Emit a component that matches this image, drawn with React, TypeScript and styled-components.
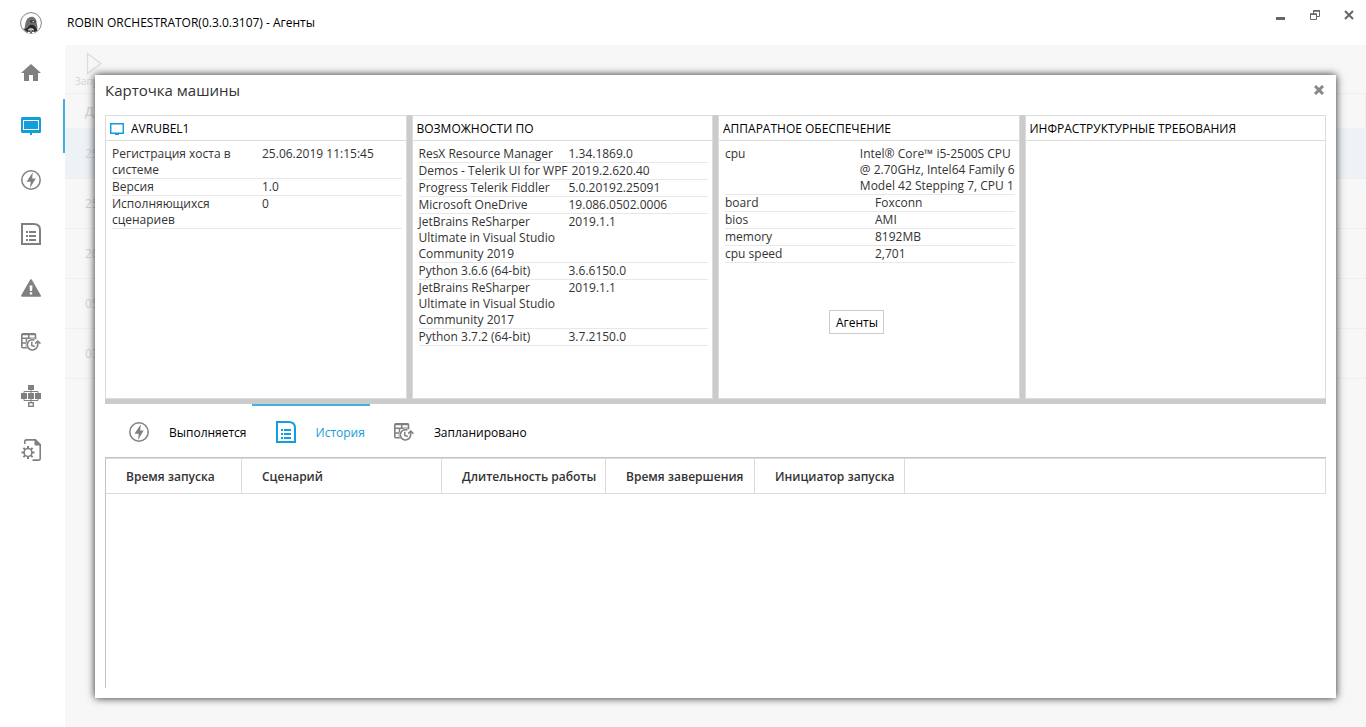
import React from 'react';
import styled, { createGlobalStyle } from 'styled-components';

const gray = '#808080';
const blue = '#119eda';
const accent = '#41b1e1';
const line = '#dcdcdc';
const splitter = '#cbcbcb';

const GlobalStyle = createGlobalStyle`
  *, *::before, *::after { box-sizing: border-box; }
  body {
    margin: 0;
    background: #fff;
    color: #333;
    font: 12px/16px "Open Sans", "Noto Sans", sans-serif;
  }
  button { font: inherit; color: inherit; background: none; border: 0; padding: 0; cursor: pointer; }
  svg { display: block; flex: none; }
  dl, dd, h1, h2 { margin: 0; padding: 0; }
`;

/* Window frame */

const Window = styled.div`
  display: flex;
  flex-direction: column;
  min-height: 100vh;
`;

const TitleBar = styled.header`
  display: flex;
  align-items: center;
  height: 45px;
  padding: 0 10px 0 20px;
`;

const WindowTitle = styled.h1`
  flex: 1;
  margin-left: 25px;
  padding-top: 1px;
  color: #000;
  font-size: 12px;
  font-weight: 400;
`;

const WindowButtons = styled.div`
  display: flex;
  gap: 20px;
  padding-bottom: 16px;
`;

const WindowButton = styled.button`
  display: grid;
  place-items: center;
  width: 14px;
  height: 20px;
`;

const Body = styled.div`
  display: flex;
  flex: 1;
`;

const Sidebar = styled.nav`
  flex: 0 0 65px;
`;

const NavButton = styled.button<{ $active?: boolean }>`
  display: flex;
  align-items: center;
  justify-content: center;
  width: 65px;
  height: 54px;
  padding-right: 1px;
  border-right: 2px solid ${p => (p.$active ? accent : 'transparent')};
`;

/* Disabled page below the dialog */

const Main = styled.main`
  position: relative;
  flex: 1;
  min-width: 0;
  background: #f7f7f7;
  color: #d4d4d4;
`;

const Toolbar = styled.div`
  height: 49px;
  padding: 7px 10px 0;
  border-bottom: 1px solid #efefef;
`;

const ToolButton = styled.button`
  display: grid;
  justify-items: start;
  font-size: 10px;
  line-height: 12px;
  svg { margin-left: 11px; }
`;

const AgentTable = styled.table`
  width: 100%;
  border-collapse: collapse;
`;

const AgentHead = styled.th`
  height: 34px;
  padding: 2px 20px 0;
  border-right: 1px solid #efefef;
  font-weight: 600;
  text-align: left;
`;

const AgentRow = styled.tr<{ $selected?: boolean }>`
  height: 50px;
  border-bottom: 1px solid #efefef;
  background: ${p => (p.$selected ? '#ecf2f6' : 'transparent')};
  td { padding: 2px 20px 0; }
`;

/* Dialog */

const Overlay = styled.div`
  position: absolute;
  inset: 0;
  display: flex;
  padding: 30px 30px 29px;
`;

const Dialog = styled.section`
  display: flex;
  flex: 1;
  flex-direction: column;
  min-width: 0;
  padding: 0 10px 10px;
  background: #fff;
  color: #333;
  box-shadow: 0 0 8px rgba(0, 0, 0, 0.85);
`;

const DialogHeader = styled.div`
  display: flex;
  align-items: center;
  justify-content: space-between;
  height: 40px;
  padding-bottom: 10px;
`;

const DialogTitle = styled.h2`
  font-size: 15px;
  line-height: 20px;
  font-weight: 400;
`;

const Panels = styled.div`
  display: grid;
  grid-template-columns: repeat(4, minmax(0, 1fr));
  gap: 5px;
  min-height: 289px;
  border-bottom: 5px solid ${splitter};
  background: ${splitter};
`;

const Panel = styled.section`
  position: relative;
  border: 1px solid ${line};
  background: #fff;
`;

const PanelTitle = styled.h2`
  display: flex;
  align-items: center;
  gap: 7px;
  height: 25px;
  padding: 2px 0 0 4px;
  border-bottom: 1px solid ${line};
  color: #000;
  font-size: 12px;
  font-weight: 400;
  white-space: nowrap;
`;

const Facts = styled.dl`
  padding: 5px 4px 0 6px;
`;

const Fact = styled.div`
  display: flex;
  justify-content: space-between;
  border-bottom: 1px solid #e8e8e8;
`;

const FactName = styled.dt<{ $oneLine?: boolean }>`
  flex: ${p => (p.$oneLine ? '0 0 auto' : '0 1 150px')};
  min-width: 0;
  padding-right: ${p => (p.$oneLine ? '4px' : '10px')};
  white-space: ${p => (p.$oneLine ? 'nowrap' : 'normal')};
`;

const FactValue = styled.dd<{ $long?: boolean }>`
  flex: ${p => (p.$long ? '0 0 auto' : '1 1 0')};
  white-space: ${p => (p.$long ? 'pre' : 'normal')};
`;

const Tooltip = styled.div`
  position: absolute;
  top: 194px;
  left: 110px;
  padding: 4px 5px 2px 6px;
  border: 1px solid #ccc;
  background: #fff;
  color: #000;
`;

const Tabs = styled.div`
  display: flex;
  height: 53px;
`;

const Tab = styled.button<{ $active?: boolean }>`
  display: flex;
  align-items: center;
  gap: 20px;
  height: 53px;
  padding: 3px 5px 0 24px;
  box-shadow: ${p => (p.$active ? `inset 0 2px ${accent}` : 'none')};
  color: ${p => (p.$active ? blue : '#000')};
`;

const TabLabel = styled.span`
  padding-top: 1px;
`;

const History = styled.div`
  flex: 1;
  border-top: 1px solid #c4c4c4;
  border-left: 1px solid #c4c4c4;
`;

const HistoryTable = styled.table`
  width: 100%;
  border-collapse: separate;
  border-spacing: 0;
  table-layout: fixed;
  border-top: 1px solid ${line};
`;

const HistoryHead = styled.th<{ $width?: number }>`
  width: ${p => (p.$width ? `${p.$width}px` : 'auto')};
  height: 35px;
  padding: 2px 0 0 20px;
  border-right: 1px solid ${line};
  border-bottom: 1px solid ${line};
  font-weight: 600;
  text-align: left;
  white-space: nowrap;
`;

/* Icons */

const Logo = () => (
  <svg width="22" height="22" viewBox="0 0 22 22">
    <circle cx="11" cy="11" r="10.4" fill="#fff" stroke="#777" strokeWidth="0.9" />
    <path d="M4.500 16.500C5.500 14 4.800 5 11.500 4.800c3.500 0 4.800 2.700 5 5.200.3 2.500 1.700 4.500.5 8-3 2.500-9 2-12.500-1.500z" fill="#707070" />
    <path d="M9.500 9c2-1.700 5-1.400 6.800.5l-.6 1-4.700.3z" fill="#3a3a3a" />
    <path d="M3 16.500c3 .8 5-.6 5.700-2.500 2-2 5-1.800 6.600.8l2.200 3.400c-3.500 3.600-10.500 3.500-14.500-1.700z" fill="#292929" />
    <path d="M8.500 18.300c.5-1.800 4.500-1.800 5 0M8 20.500h2M12 20.500h2.500M11 18v1.500" stroke="#fff" strokeWidth="1.300" fill="none" />
    <circle cx="13.300" cy="9.500" r=".8" fill="#ddd" />
  </svg>
);

const HomeIcon = () => (
  <svg width="20" height="17" viewBox="2 3 20 17" fill={gray}>
    <path d="M10 20v-6h4v6h5v-8h3L12 3 2 12h3v8z" />
  </svg>
);

const MachineIcon = () => (
  <svg width="20" height="18" viewBox="0 0 20 18">
    <rect width="20" height="16" rx="1.500" fill={blue} />
    <rect x="2.500" y="3.500" width="15" height="9" fill={blue} stroke="#fff" />
    <path d="M9 15h2v3H9z" fill={blue} />
  </svg>
);

const BoltIcon = () => (
  <svg width="20" height="20" viewBox="0 0 20 20">
    <circle cx="10" cy="10" r="9.200" fill="none" stroke={gray} strokeWidth="1.500" />
    <path d="M11.800 2.300 5.500 11.700h4.200L9 18l5.700-9.500h-3.500z" fill={gray} />
  </svg>
);

const ListIcon = ({ color = gray }: { color?: string }) => (
  <svg width="20" height="22" viewBox="0 0 20 22">
    <path d="M1 1h11.500C17 1 19 3.500 19 7v14H1z" fill="none" stroke={color} strokeWidth="2" />
    <path d="M5 8h2v2H5zM8 8h7v2H8zM5 12h2v2H5zM8 12h7v2H8zM5 16h2v2H5zM8 16h7v2H8z" fill={color} />
  </svg>
);

const WarningIcon = () => (
  <svg width="20" height="18" viewBox="0 0 20 18">
    <path d="M10 1.200 18.900 16.800H1.100z" fill={gray} stroke={gray} strokeWidth="2" strokeLinejoin="round" />
    <path d="M8.500 6.500h3l-.4 5.500H8.900zM8.800 13.300h2.400v2.300H8.800z" fill="#fff" />
  </svg>
);

const ScheduleIcon = () => (
  <svg width="20" height="18" viewBox="0 0 20 18" fill="none" stroke={gray}>
    <rect x=".8" y=".8" width="13.700" height="14" rx="1" strokeWidth="1.600" />
    <path d="M1 1.500h13.500" strokeWidth="1.500" />
    <path d="M1 5.200h13.500M1 10h6M5.500 5v10M7.700 1v4" strokeWidth="1.500" />
    <circle cx="11.500" cy="11.800" r="6.500" fill="#fff" stroke="none" />
    <path d="M13.500 7a5.200 5.200 0 1 0 3.200 4.800V8.500" strokeWidth="1.600" />
    <path d="M14.200 10.600 16.800 8l2.600 2.600" strokeWidth="1.500" />
    <path d="M10.800 8.800v3.700l3 1" strokeWidth="1.500" />
  </svg>
);

const NetworkIcon = () => (
  <svg width="20" height="22" viewBox="0 0 20 22">
    <path d="M7 0h6v5H7zM0 8h6v6H0zM7 8h6v6H7zM14 8h6v6h-6z" fill={gray} />
    <path d="M3 8V6.500h14V8M10 5v3M3 14v1.500h14V14M10 14v3" fill="none" stroke={gray} />
    <rect x="7.700" y="17.700" width="4.600" height="3.600" fill="#fff" stroke={gray} strokeWidth="1.400" />
  </svg>
);

const teeth = [0, 45, 90, 135, 180, 225, 270, 315];

const SettingsIcon = () => (
  <svg width="20" height="22" viewBox="0 0 20 22" fill="none" stroke={gray}>
    <path d="M3.800 5V2.300c0-.9.500-1.400 1.400-1.400h9.300L19.200 5.500v14.300c0 .8-.5 1.300-1.300 1.300H11.500" strokeWidth="1.600" />
    <path d="M14 1v5h5z" fill={gray} strokeWidth="1" />
    <circle cx="7" cy="13.500" r="3.900" strokeWidth="1.500" />
    {teeth.map(angle => (
      <path key={angle} d="M7 9.800V7" strokeWidth="2" transform={`rotate(${angle} 7 13.500)`} />
    ))}
  </svg>
);

const MonitorIcon = () => (
  <svg width="14" height="12" viewBox="0 0 14 12">
    <path d="M.7.700h12.600v9.600H.7z" fill="none" stroke={blue} strokeWidth="1.500" />
    <path d="M5 10.500h4V12H5z" fill={blue} />
  </svg>
);

const PlayIcon = () => (
  <svg width="16" height="23" viewBox="0 0 16 23">
    <path d="M1.500 1.500 15 11.500 1.500 21.500z" fill="none" stroke="#dcdcdc" strokeWidth="1.300" />
  </svg>
);

const CloseIcon = ({ color, thickness }: { color: string; thickness: number }) => (
  <svg width="10" height="10" viewBox="0 0 10 10">
    <path d="M1 1l8 8M9 1 1 9" stroke={color} strokeWidth={thickness} />
  </svg>
);

/* Data */

const navItems = [
  { label: 'Главная', icon: <HomeIcon /> },
  { label: 'Агенты', icon: <MachineIcon />, active: true },
  { label: 'Выполняется', icon: <BoltIcon /> },
  { label: 'История', icon: <ListIcon /> },
  { label: 'Ошибки', icon: <WarningIcon /> },
  { label: 'Запланировано', icon: <ScheduleIcon /> },
  { label: 'Сеть', icon: <NetworkIcon /> },
  { label: 'Настройки', icon: <SettingsIcon /> },
];

type Item = { name: string; value: string; oneLine?: boolean; long?: boolean };

const hostFacts: Item[] = [
  { name: 'Регистрация хоста в системе', value: '25.06.2019 11:15:45' },
  { name: 'Версия', value: '1.0' },
  { name: 'Исполняющихся сценариев', value: '0' },
];

const softwareFacts: Item[] = [
  { name: 'ResX Resource Manager', value: '1.34.1869.0' },
  { name: 'Demos - Telerik UI for WPF', value: '2019.2.620.40', oneLine: true },
  { name: 'Progress Telerik Fiddler', value: '5.0.20192.25091' },
  { name: 'Microsoft OneDrive', value: '19.086.0502.0006' },
  { name: 'JetBrains ReSharper Ultimate in Visual Studio Community 2019', value: '2019.1.1' },
  { name: 'Python 3.6.6 (64-bit)', value: '3.6.6150.0' },
  { name: 'JetBrains ReSharper Ultimate in Visual Studio Community 2017', value: '2019.1.1' },
  { name: 'Python 3.7.2 (64-bit)', value: '3.7.2150.0' },
];

const hardwareFacts: Item[] = [
  {
    name: 'cpu',
    value: 'Intel® Core™ i5-2500S CPU\n@ 2.70GHz, Intel64 Family 6\nModel 42 Stepping 7, CPU 1',
    long: true,
  },
  { name: 'board', value: 'Foxconn' },
  { name: 'bios', value: 'AMI' },
  { name: 'memory', value: '8192MB' },
  { name: 'cpu speed', value: '2,701' },
];

const historyColumns = [
  { label: 'Время запуска', width: 136 },
  { label: 'Сценарий', width: 200 },
  { label: 'Длительность работы', width: 164 },
  { label: 'Время завершения', width: 149 },
  { label: 'Инициатор запуска', width: 150 },
];

const agentDays = ['25', '25', '20', '05', '03'];

const FactList = ({ items }: { items: Item[] }) => (
  <Facts>
    {items.map(item => (
      <Fact key={item.name}>
        <FactName $oneLine={item.oneLine}>{item.name}</FactName>
        <FactValue $long={item.long}>{item.value}</FactValue>
      </Fact>
    ))}
  </Facts>
);

export default function App() {
  return (
    <Window>
      <GlobalStyle />
      <TitleBar>
        <Logo />
        <WindowTitle>ROBIN ORCHESTRATOR(0.3.0.3107) - Агенты</WindowTitle>
        <WindowButtons>
          <WindowButton aria-label="Свернуть">
            <svg width="10" height="10" viewBox="0 0 10 10"><path d="M0 7h9v3H0z" fill="#666" /></svg>
          </WindowButton>
          <WindowButton aria-label="Восстановить">
            <svg width="10" height="10" viewBox="0 0 10 10" fill="none" stroke="#666">
              <path d="M.5 4.500h6v5h-6zM3.500 4V.5h6v6H7" />
              <path d="M0 4h7M3 1h7" strokeWidth="1.500" />
            </svg>
          </WindowButton>
          <WindowButton aria-label="Закрыть">
            <CloseIcon color="#666" thickness={2} />
          </WindowButton>
        </WindowButtons>
      </TitleBar>
      <Body>
        <Sidebar>
          {navItems.map(item => (
            <NavButton key={item.label} aria-label={item.label} $active={item.active}>
              {item.icon}
            </NavButton>
          ))}
        </Sidebar>
        <Main>
          <Toolbar>
            <ToolButton disabled>
              <PlayIcon />
              Запу
            </ToolButton>
          </Toolbar>
          <AgentTable>
            <thead>
              <tr><AgentHead>Д</AgentHead></tr>
            </thead>
            <tbody>
              {agentDays.map((day, i) => (
                <AgentRow key={i} $selected={i === 0}><td>{day}</td></AgentRow>
              ))}
            </tbody>
          </AgentTable>
          <Overlay>
            <Dialog role="dialog" aria-labelledby="machine-card-title">
              <DialogHeader>
                <DialogTitle id="machine-card-title">Карточка машины</DialogTitle>
                <WindowButton aria-label="Закрыть карточку">
                  <CloseIcon color="#888" thickness={3} />
                </WindowButton>
              </DialogHeader>
              <Panels>
                <Panel>
                  <PanelTitle><MonitorIcon />AVRUBEL1</PanelTitle>
                  <FactList items={hostFacts} />
                </Panel>
                <Panel>
                  <PanelTitle>ВОЗМОЖНОСТИ ПО</PanelTitle>
                  <FactList items={softwareFacts} />
                </Panel>
                <Panel>
                  <PanelTitle>АППАРАТНОЕ ОБЕСПЕЧЕНИЕ</PanelTitle>
                  <FactList items={hardwareFacts} />
                  <Tooltip role="tooltip">Агенты</Tooltip>
                </Panel>
                <Panel>
                  <PanelTitle>ИНФРАСТРУКТУРНЫЕ ТРЕБОВАНИЯ</PanelTitle>
                </Panel>
              </Panels>
              <Tabs role="tablist">
                <Tab role="tab" aria-selected={false}><BoltIcon /><TabLabel>Выполняется</TabLabel></Tab>
                <Tab role="tab" aria-selected $active><ListIcon color={blue} /><TabLabel>История</TabLabel></Tab>
                <Tab role="tab" aria-selected={false}><ScheduleIcon /><TabLabel>Запланировано</TabLabel></Tab>
              </Tabs>
              <History>
                <HistoryTable>
                  <thead>
                    <tr>
                      {historyColumns.map(column => (
                        <HistoryHead key={column.label} $width={column.width}>{column.label}</HistoryHead>
                      ))}
                      <HistoryHead />
                    </tr>
                  </thead>
                </HistoryTable>
              </History>
            </Dialog>
          </Overlay>
        </Main>
      </Body>
    </Window>
  );
}
